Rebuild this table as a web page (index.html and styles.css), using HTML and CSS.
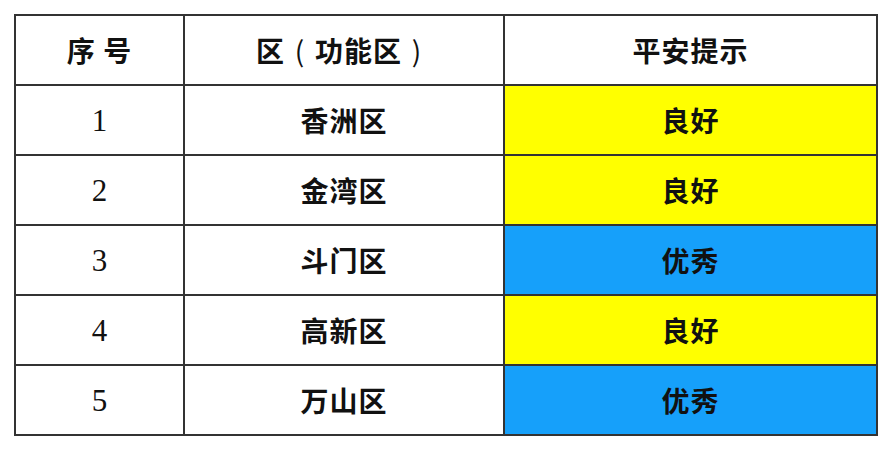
FILE: index.html
```html
<!DOCTYPE html>
<html lang="zh-CN">
<head>
<meta charset="utf-8">
<link rel="stylesheet" href="styles.css">
</head>
<body>
<table class="grid">
  <colgroup>
    <col class="c1"><col class="c2"><col class="c3">
  </colgroup>
  <thead>
    <tr><th>序&nbsp;号</th><th>区<span class="paren">(</span>功能区<span class="paren">)</span></th><th>平安提示</th></tr>
  </thead>
  <tbody>
    <tr><td class="num">1</td><td>香洲区</td><td class="good">良好</td></tr>
    <tr><td class="num">2</td><td>金湾区</td><td class="good">良好</td></tr>
    <tr><td class="num">3</td><td>斗门区</td><td class="excellent">优秀</td></tr>
    <tr><td class="num">4</td><td>高新区</td><td class="good">良好</td></tr>
    <tr><td class="num">5</td><td>万山区</td><td class="excellent">优秀</td></tr>
  </tbody>
</table>
</body>
</html>
```
FILE: styles.css
```css
html, body {
  margin: 0;
  padding: 0;
  background: #ffffff;
}
body {
  padding: 14px 0 0 14px;
  font-family: "Noto Sans CJK SC", "Noto Sans", sans-serif;
  color: #111;
}
.grid {
  border-collapse: collapse;
  table-layout: fixed;
  width: 862px;
}
.c1 { width: 169px; }
.c2 { width: 320px; }
.c3 { width: 373px; }
.grid th, .grid td {
  height: 68px;
  border: 2px solid #333;
  text-align: center;
  vertical-align: middle;
  padding: 0;
  font-size: 28px;
  font-weight: 700;
  letter-spacing: 1px;
  line-height: 1;
}
.grid th .paren {
  display: inline-block;
  width: 30px;
  text-align: center;
  font-weight: 400;
}
.grid td.num {
  font-family: "Liberation Serif", "DejaVu Serif", serif;
  font-weight: 400;
  font-size: 31px;
  letter-spacing: 0;
}
.good { background: #ffff00; }
.excellent { background: #16a0fa; }
```
